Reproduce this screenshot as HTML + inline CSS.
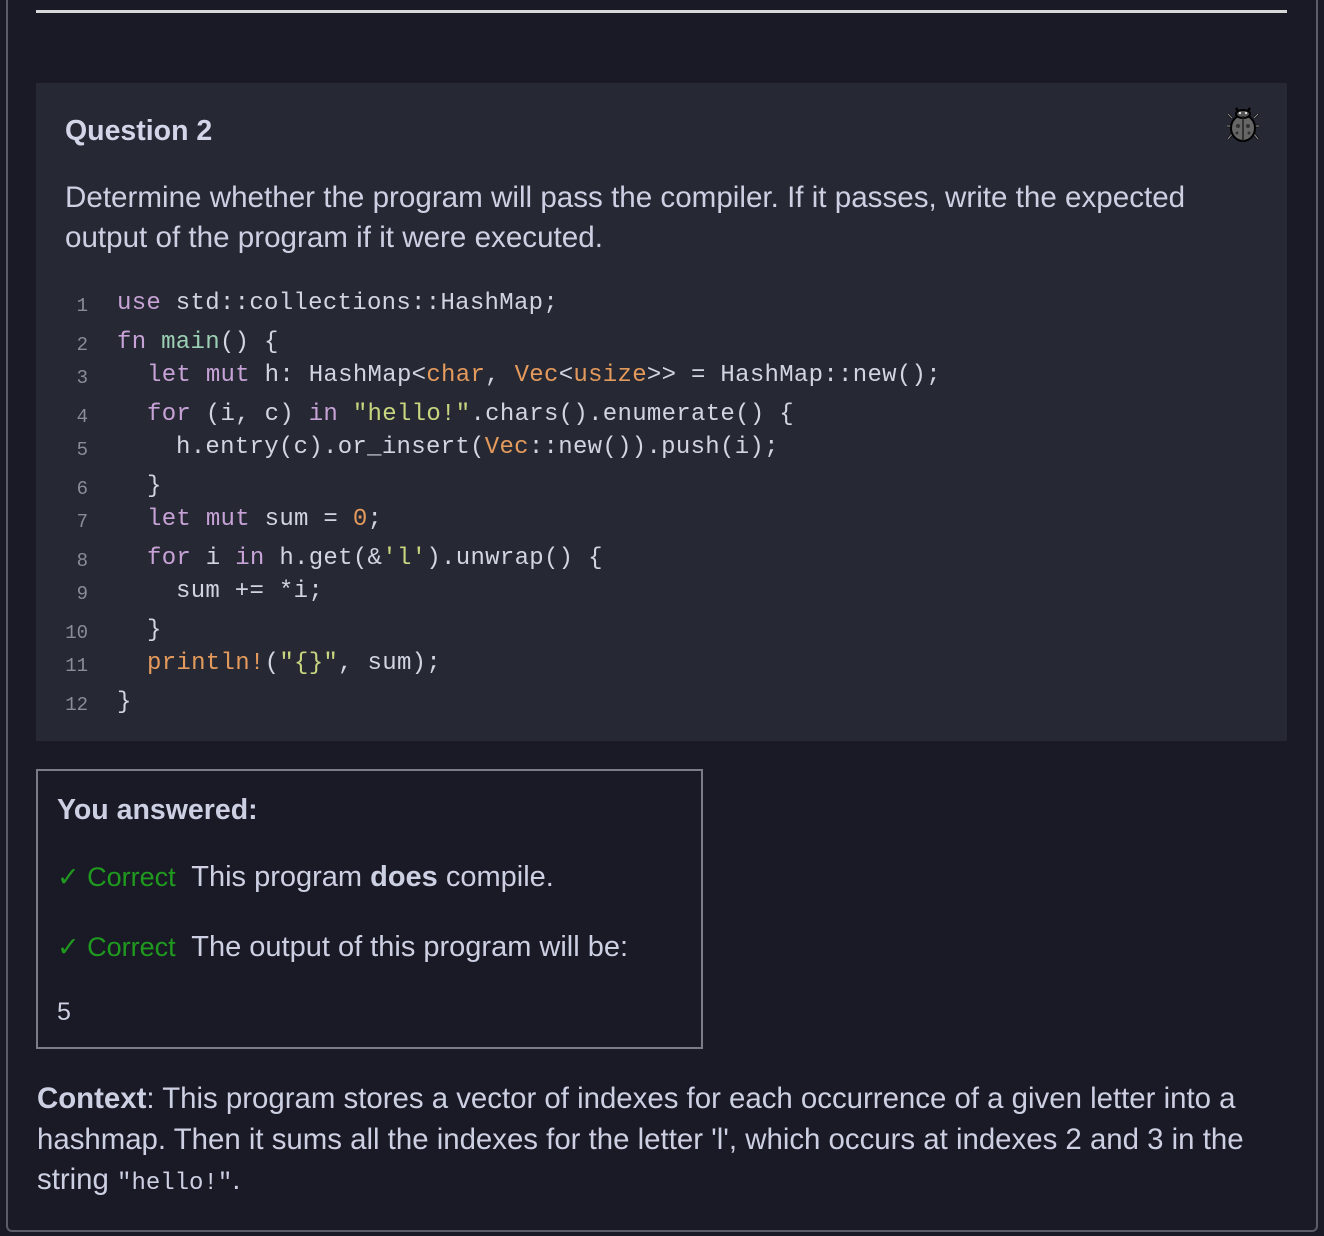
<!DOCTYPE html>
<html><head><meta charset="utf-8"><style>
html,body{margin:0;padding:0;background:#191a25;width:1324px;height:1236px;overflow:hidden;position:relative;font-family:"Liberation Sans",sans-serif;color:#cdd0e3}
.abs{position:absolute;white-space:nowrap}
.frame{position:absolute;left:6px;top:-10px;width:1308px;height:1238px;border:2px solid #5a5c68;border-radius:6px}
.hr{position:absolute;left:36px;top:10px;width:1251px;height:3px;background:#d8d8d8}
.card{position:absolute;left:36px;top:83px;width:1251px;height:658px;background:#262833}
.code{font-family:"Liberation Mono",monospace;font-size:24px;letter-spacing:0.3px;color:#d2d4e2}
.ln{font-family:"Liberation Mono",monospace;font-size:19px;color:#8a8d99;text-align:right;width:26px;left:62px}
.k{color:#c6a2d6}.f{color:#9cd0b4}.o{color:#e39a5c}.s{color:#c8d67f}
.box{position:absolute;left:36px;top:769px;width:663px;height:276px;border:2px solid #7a7c88}
.g{color:#1f9a1f;font-size:27px}
</style></head><body>
<div class="frame"></div>
<div class="hr"></div>
<div class="card"></div>
<div class="abs" style="left:65px;top:115px;font-size:28.5px;font-weight:bold;color:#d3d6e8">Question 2</div>
<svg class="abs" style="left:1226px;top:106px" width="34" height="38" viewBox="0 0 34 38">
<g stroke="#000" stroke-width="2.5" fill="none"><path d="M6 12 L2 8 M28 12 L32 8 M5 20 H1 M29 20 H33 M6 28 L2 33 M28 28 L32 33 M12 5 L10 2 M22 5 L24 2"/></g>
<g stroke="#888" stroke-width="1.2" fill="none"><path d="M6 12 L2 8 M28 12 L32 8 M5 20 H1 M29 20 H33 M6 28 L2 33 M28 28 L32 33"/></g>
<ellipse cx="17" cy="22" rx="12" ry="13" fill="#666" stroke="#000" stroke-width="2"/>
<ellipse cx="17" cy="8" rx="7" ry="4" fill="#555" stroke="#000" stroke-width="2"/>
<path d="M17 10 V35" stroke="#222" stroke-width="1.5"/>
<circle cx="12" cy="20" r="2" fill="#333"/><circle cx="22" cy="20" r="2" fill="#333"/><circle cx="11" cy="27" r="1.5" fill="#333"/><circle cx="23" cy="27" r="1.5" fill="#333"/>
<circle cx="14" cy="7" r="1.2" fill="#ddd"/><circle cx="20" cy="7" r="1.2" fill="#ddd"/>
</svg>
<div class="abs" style="left:65px;top:178px;font-size:29.6px;line-height:40px;color:#cdd0e3">Determine whether the program will pass the compiler. If it passes, write the expected<br>output of the program if it were executed.</div>

<div class="abs ln" style="top:295px">1</div><div class="abs code" style="left:117px;top:290px"><span class="k">use</span> std::collections::HashMap;</div>
<div class="abs ln" style="top:334px">2</div><div class="abs code" style="left:117px;top:329px"><span class="k">fn</span> <span class="f">main</span>() {</div>
<div class="abs ln" style="top:367px">3</div><div class="abs code" style="left:147px;top:362px"><span class="k">let</span> <span class="k">mut</span> h: HashMap&lt;<span class="o">char</span>, <span class="o">Vec</span>&lt;<span class="o">usize</span>&gt;&gt; = HashMap::new();</div>
<div class="abs ln" style="top:406px">4</div><div class="abs code" style="left:147px;top:401px"><span class="k">for</span> (i, c) <span class="k">in</span> <span class="s">"hello!"</span>.chars().enumerate() {</div>
<div class="abs ln" style="top:439px">5</div><div class="abs code" style="left:176px;top:434px">h.entry(c).or_insert(<span class="o">Vec</span>::new()).push(i);</div>
<div class="abs ln" style="top:478px">6</div><div class="abs code" style="left:147px;top:473px">}</div>
<div class="abs ln" style="top:511px">7</div><div class="abs code" style="left:147px;top:506px"><span class="k">let</span> <span class="k">mut</span> sum = <span class="o">0</span>;</div>
<div class="abs ln" style="top:550px">8</div><div class="abs code" style="left:147px;top:545px"><span class="k">for</span> i <span class="k">in</span> h.get(&amp;<span class="s">'l'</span>).unwrap() {</div>
<div class="abs ln" style="top:583px">9</div><div class="abs code" style="left:176px;top:578px">sum += *i;</div>
<div class="abs ln" style="top:622px">10</div><div class="abs code" style="left:147px;top:617px">}</div>
<div class="abs ln" style="top:655px">11</div><div class="abs code" style="left:147px;top:650px"><span class="o">println!</span>(<span class="s">"{}"</span>, sum);</div>
<div class="abs ln" style="top:694px">12</div><div class="abs code" style="left:117px;top:689px">}</div>

<div class="box"></div>
<div class="abs" style="left:57px;top:794px;font-size:28.5px;font-weight:bold;color:#cdd0e3">You answered:</div>
<div class="abs" style="left:57px;top:861px;font-size:29px"><span class="g">✓ Correct</span>&nbsp; This program <b>does</b> compile.</div>
<div class="abs" style="left:57px;top:931px;font-size:29px"><span class="g">✓ Correct</span>&nbsp; The output of this program will be:</div>
<div class="abs" style="left:57px;top:998px;font-size:25px">5</div>

<div class="abs" style="left:37px;top:1079px;font-size:29.4px;line-height:40.5px"><b>Context</b>: This program stores a vector of indexes for each occurrence of a given letter into a<br>hashmap. Then it sums all the indexes for the letter 'l', which occurs at indexes 2 and 3 in the<br>string <span style="font-family:'Liberation Mono',monospace;font-size:24px">"hello!"</span>.</div>
</body></html>
